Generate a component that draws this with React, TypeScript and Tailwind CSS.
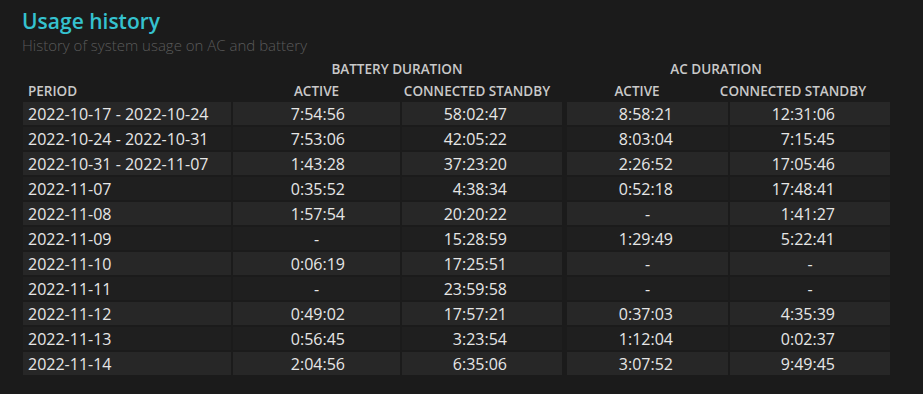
const rows: string[][] = [
  ['2022-10-17 - 2022-10-24', '7:54:56', '58:02:47', '8:58:21', '12:31:06'],
  ['2022-10-24 - 2022-10-31', '7:53:06', '42:05:22', '8:03:04', '7:15:45'],
  ['2022-10-31 - 2022-11-07', '1:43:28', '37:23:20', '2:26:52', '17:05:46'],
  ['2022-11-07', '0:35:52', '4:38:34', '0:52:18', '17:48:41'],
  ['2022-11-08', '1:57:54', '20:20:22', '-', '1:41:27'],
  ['2022-11-09', '-', '15:28:59', '1:29:49', '5:22:41'],
  ['2022-11-10', '0:06:19', '17:25:51', '-', '-'],
  ['2022-11-11', '-', '23:59:58', '-', '-'],
  ['2022-11-12', '0:49:02', '17:57:21', '0:37:03', '4:35:39'],
  ['2022-11-13', '0:56:45', '3:23:54', '1:12:04', '0:02:37'],
  ['2022-11-14', '2:04:56', '6:35:06', '3:07:52', '9:49:45'],
];

function Cell({ value, bg }: { value: string; bg: string }) {
  const empty = value === '-';
  return (
    <div className={`${bg} h-[23px] pt-px leading-[23px] ${empty ? 'text-center' : 'text-right pr-[55px]'}`}>
      {value}
    </div>
  );
}

function Head({ children, className = '' }: { children: React.ReactNode; className?: string }) {
  return <div className={`flex justify-center whitespace-nowrap ${className}`}>{children}</div>;
}

export default function App() {
  return (
    <div
      className="min-h-screen w-full bg-[#1b1b1b] px-[23px] pt-[7px] text-[#e6e6e6]"
      style={{ fontFamily: '"Open Sans", "Noto Sans", sans-serif' }}
    >
      {/* Title */}
      <h1 className="-ml-px h-[28px] text-[21px] leading-[28px] font-semibold text-[#35c2cf]">Usage history</h1>
      <p className="-ml-px h-[20px] text-[15px] leading-[20px] font-light text-[#5a5a5a]">
        History of system usage on AC and battery
      </p>

      {/* Group headers */}
      <div className="mt-[4px] grid h-[22px] grid-cols-[208px_167px_150px_166px_142px] gap-x-[2px] text-[13.5px] leading-[20px] font-semibold text-[#c9c9c9]">
        <div />
        <Head className="col-span-2 pl-[9px]">BATTERY DURATION</Head>
        <Head className="col-span-2 pl-[14px]">AC DURATION</Head>
      </div>

      {/* Column headers */}
      <div className="grid h-[20px] grid-cols-[208px_167px_150px_166px_142px] gap-x-[2px] text-[13.5px] leading-[20px] font-semibold text-[#c9c9c9]">
        <div className="pl-[5px]">PERIOD</div>
        <Head>ACTIVE</Head>
        <Head>CONNECTED STANDBY</Head>
        <Head>ACTIVE</Head>
        <Head>CONNECTED STANDBY</Head>
      </div>

      {/* Data rows */}
      <div className="mt-px flex flex-col gap-y-[2px] text-[16px]">
        {rows.map((r, i) => {
          const bg = i % 2 === 0 ? 'bg-[#272727]' : 'bg-[#1f1f1f]';
          return (
            <div key={r[0]} className="grid grid-cols-[208px_167px_160px_1px_161px_160px] gap-x-[2px]">
              <div className={`${bg} h-[23px] pt-px pl-[5px] leading-[23px]`}>{r[0]}</div>
              <Cell value={r[1]} bg={bg} />
              <Cell value={r[2]} bg={bg} />
              <div />
              <Cell value={r[3]} bg={bg} />
              <Cell value={r[4]} bg={bg} />
            </div>
          );
        })}
      </div>
    </div>
  );
}
